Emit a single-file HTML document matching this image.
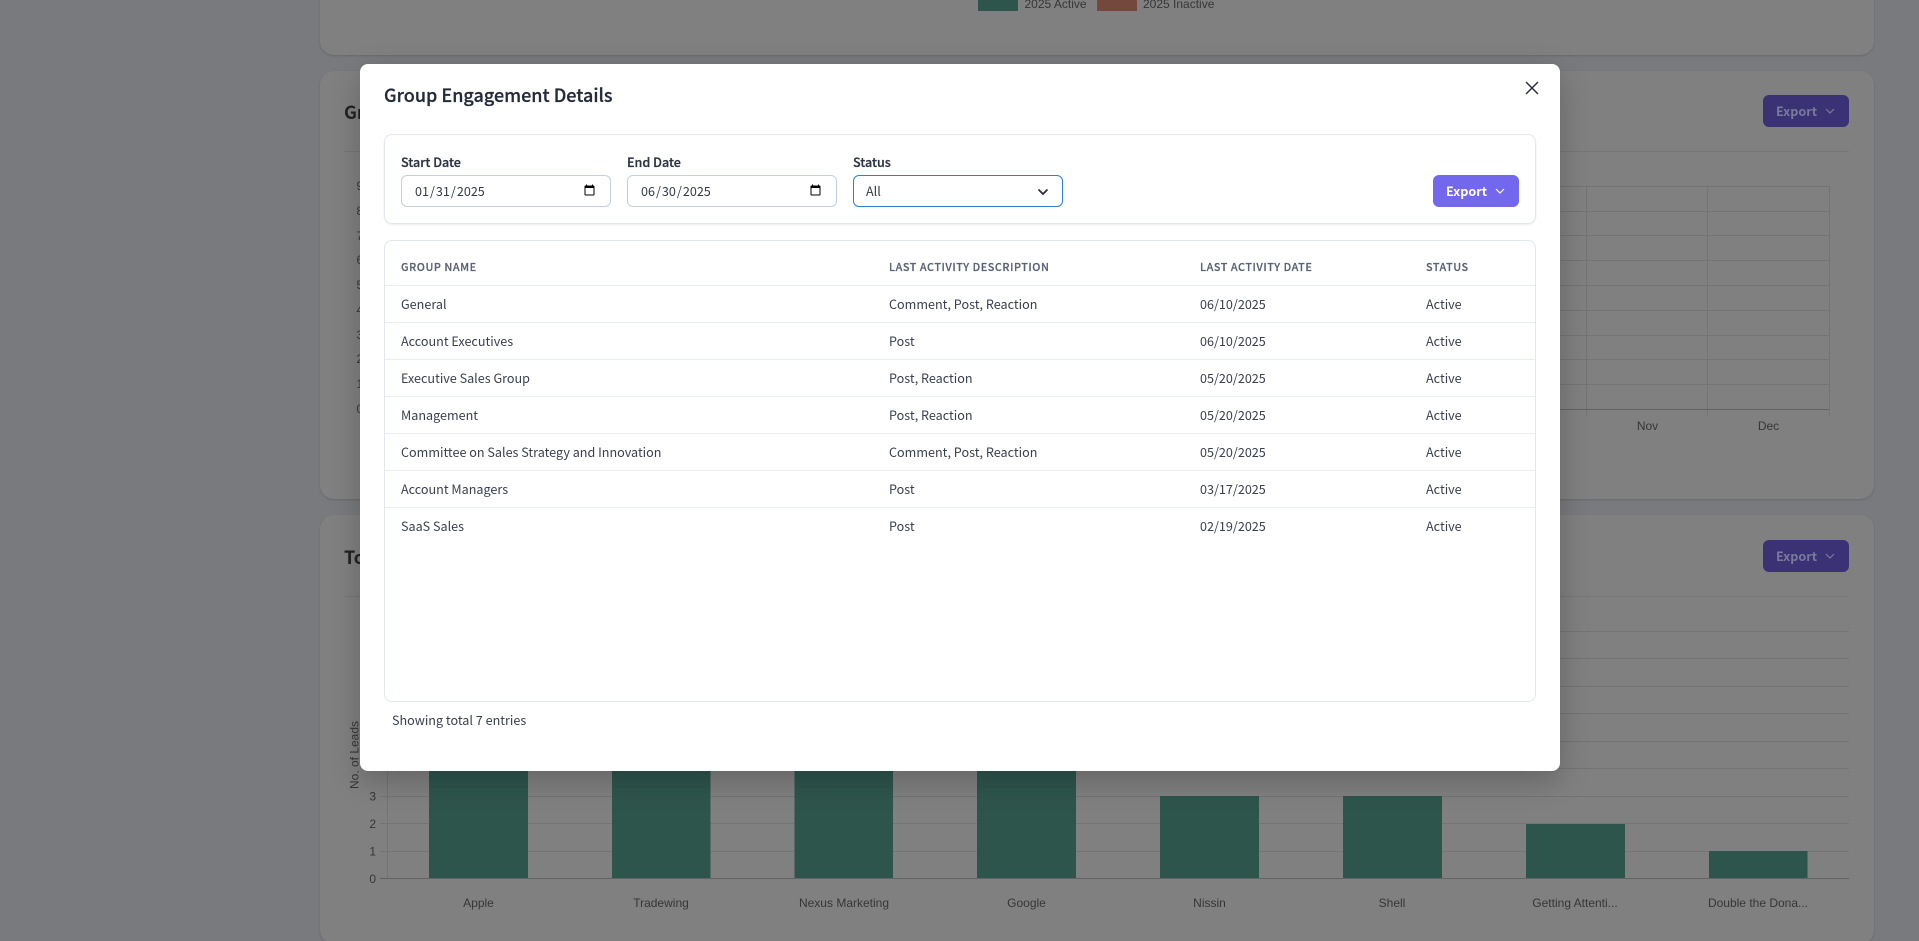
<!DOCTYPE html>
<html lang="en">
<head>
<meta charset="utf-8">
<title>Group Engagement Details</title>
<style>
*{box-sizing:border-box}
html,body{margin:0;padding:0;width:1919px;height:941px;overflow:hidden;background:#797a7d}
body{position:relative;font-family:"Noto Sans CJK SC","Liberation Sans",sans-serif;color:#343a4a}
.bgcard{position:absolute;left:320px;width:1554px;background:#808080;border-radius:14px;box-shadow:0 1px 2px rgba(0,0,0,.14)}
svg.bg{position:absolute;left:0;top:0}
svg.bg text{font-family:"Liberation Sans",sans-serif;font-size:12px;fill:#363636}
.bgtitle{position:absolute;left:344px;font-size:18px;font-weight:700;color:#222;line-height:24px;white-space:nowrap}
.bgbtn{position:absolute;left:1763px;width:86px;height:32px;border-radius:6px;background:#3a3274;color:#7a7a98;font-size:12.6px;font-weight:700;line-height:32px;padding-left:13px}
.bgbtn svg{position:absolute;left:62px;top:13px}
.modal{position:absolute;left:360px;top:64px;width:1200px;height:707px;background:#fff;border-radius:8px;box-shadow:0 10px 30px rgba(0,0,0,.22)}
.abs{position:absolute}
h2{position:absolute;left:24px;top:15px;margin:0;font-size:18px;font-weight:500;line-height:32px;color:#252b3a;white-space:nowrap;-webkit-text-stroke:.25px #252b3a}
.filter{position:absolute;left:24px;top:70px;width:1152px;height:90px;border:1px solid #e2e6f0;border-radius:8px;box-shadow:0 1px 2px rgba(30,40,80,.08)}
label{position:absolute;top:15.5px;font-size:12.6px;font-weight:500;line-height:22px;color:#2c3344;-webkit-text-stroke:.25px #2c3344}
input,select{position:absolute;top:40px;width:210px;height:32px;font-family:"Noto Sans CJK SC","Liberation Sans",sans-serif;font-size:12.6px;color:#343a4a;background:#fff;border:1px solid #c3cfe0;border-radius:6px;padding:0 12px 2px;outline:none}
select{appearance:none;-webkit-appearance:none;border-color:#2e7ed6}
.tcard{position:absolute;left:24px;top:176px;width:1152px;height:462px;border:1px solid #e2e6f0;border-radius:8px;overflow:hidden}
table{border-collapse:separate;border-spacing:0;table-layout:fixed;width:1150px;margin-top:0;font-size:12.6px}
th{height:45px;padding:8px 0 0 16px;font-size:10.8px;font-weight:500;letter-spacing:.55px;text-align:left;color:#5a6175;text-transform:uppercase;border-bottom:1px solid #e8ecf3;line-height:18px;-webkit-text-stroke:.2px #5a6175}
td{height:37px;padding:0 0 0 16px;border-bottom:1px solid #e8ecf3;color:#3a4050;line-height:20px}
tr:last-child td{border-bottom:0;padding-bottom:2px}
.btn{position:absolute;left:1073px;top:111px;width:86px;height:32px;background:#7367ee;border-radius:6px;color:#fff;font-size:12.6px;font-weight:700;line-height:32px;padding-left:13px}
.foot{position:absolute;left:32px;top:645px;font-size:12.6px;line-height:22px;color:#3a4050;white-space:nowrap}
</style>
</head>
<body>
<div class="bgcard" style="top:-300px;height:355px"></div>
<div class="bgcard" style="top:71px;height:428px"></div>
<div class="bgcard" style="top:515px;height:429px"></div>

<svg class="bg" width="1919" height="941" viewBox="0 0 1919 941">
  <!-- legend -->
  <rect x="978" y="-6" width="40" height="17" fill="#2e554c"/>
  <text x="1024.5" y="8">2025 Active</text>
  <rect x="1097" y="-6" width="40" height="17" fill="#74483c"/>
  <text x="1143" y="8">2025 Inactive</text>

  <!-- dividers -->
  <g stroke="#767676" stroke-width="1">
    <line x1="344" y1="151.5" x2="1849" y2="151.5"/>
    <line x1="344" y1="596.5" x2="1849" y2="596.5"/>
  </g>

  <!-- chart 2 grid -->
  <g stroke="#747474" stroke-width="1">
    <line x1="370" y1="186.5" x2="1829" y2="186.5"/>
    <line x1="370" y1="211.5" x2="1829" y2="211.5"/>
    <line x1="370" y1="235.5" x2="1829" y2="235.5"/>
    <line x1="370" y1="260.5" x2="1829" y2="260.5"/>
    <line x1="370" y1="285.5" x2="1829" y2="285.5"/>
    <line x1="370" y1="310.5" x2="1829" y2="310.5"/>
    <line x1="370" y1="335.5" x2="1829" y2="335.5"/>
    <line x1="370" y1="359.5" x2="1829" y2="359.5"/>
    <line x1="370" y1="384.5" x2="1829" y2="384.5"/>
    <line x1="1586.5" y1="186" x2="1586.5" y2="416"/>
    <line x1="1707.5" y1="186" x2="1707.5" y2="416"/>
    <line x1="1829.5" y1="186" x2="1829.5" y2="416"/>
  </g>
  <line x1="370" y1="409.5" x2="1829" y2="409.5" stroke="#626262" stroke-width="1"/>
  <g>
    <text x="356.5" y="190">9</text><text x="356.5" y="215">8</text><text x="356.5" y="240">7</text>
    <text x="356.5" y="264">6</text><text x="356.5" y="289">5</text><text x="356.5" y="314">4</text>
    <text x="356.5" y="339">3</text><text x="356.5" y="363">2</text><text x="356.5" y="388">1</text>
    <text x="356.5" y="413">0</text>
    <text x="1647.5" y="430" text-anchor="middle">Nov</text>
    <text x="1768.5" y="430" text-anchor="middle">Dec</text>
  </g>

  <!-- chart 3 grid -->
  <g stroke="#747474" stroke-width="1">
    <line x1="380" y1="631.5" x2="1849" y2="631.5"/>
    <line x1="380" y1="658.5" x2="1849" y2="658.5"/>
    <line x1="380" y1="686.5" x2="1849" y2="686.5"/>
    <line x1="380" y1="713.5" x2="1849" y2="713.5"/>
    <line x1="380" y1="741.5" x2="1849" y2="741.5"/>
    <line x1="380" y1="768.5" x2="1849" y2="768.5"/>
    <line x1="380" y1="796.5" x2="1849" y2="796.5"/>
    <line x1="380" y1="823.5" x2="1849" y2="823.5"/>
    <line x1="380" y1="851.5" x2="1849" y2="851.5"/>
    <line x1="387.5" y1="620" x2="387.5" y2="878"/>
  </g>
  <line x1="380" y1="878.5" x2="1849" y2="878.5" stroke="#626262" stroke-width="1"/>
  <g fill="#2e554c">
    <rect x="429" y="700" width="99" height="178"/>
    <rect x="612" y="700" width="98.500" height="178"/>
    <rect x="794.500" y="700" width="98.500" height="178"/>
    <rect x="977" y="700" width="99" height="178"/>
    <rect x="1160" y="796" width="99" height="82"/>
    <rect x="1343" y="796" width="99" height="82"/>
    <rect x="1526" y="824" width="99" height="54"/>
    <rect x="1709" y="851" width="98.500" height="27"/>
  </g>
  <g>
    <text x="376" y="800.500" text-anchor="end">3</text>
    <text x="376" y="828" text-anchor="end">2</text>
    <text x="376" y="855.500" text-anchor="end">1</text>
    <text x="376" y="883" text-anchor="end">0</text>
    <text x="478.500" y="907" text-anchor="middle">Apple</text>
    <text x="661" y="907" text-anchor="middle">Tradewing</text>
    <text x="844" y="907" text-anchor="middle">Nexus Marketing</text>
    <text x="1026.500" y="907" text-anchor="middle">Google</text>
    <text x="1209.500" y="907" text-anchor="middle">Nissin</text>
    <text x="1392" y="907" text-anchor="middle">Shell</text>
    <text x="1575" y="907" text-anchor="middle">Getting Attenti...</text>
    <text x="1758" y="907" text-anchor="middle">Double the Dona...</text>
    <text transform="translate(358.500 755) rotate(-90)" text-anchor="middle">No. of Leads</text>
  </g>
</svg>

<div class="bgtitle" style="top:100px">Group Engagement</div>
<div class="bgtitle" style="top:545px">Top Companies</div>
<div class="bgbtn" style="top:95px">Export<svg width="10" height="7" viewBox="0 0 10 7"><path d="M1 1l4 4 4-4" fill="none" stroke="#7a7a98" stroke-width="1.200"/></svg></div>
<div class="bgbtn" style="top:540px">Export<svg width="10" height="7" viewBox="0 0 10 7"><path d="M1 1l4 4 4-4" fill="none" stroke="#7a7a98" stroke-width="1.200"/></svg></div>

<div class="modal">
  <h2>Group Engagement Details</h2>
  <svg class="abs" style="left:1165px;top:17px" width="14" height="14" viewBox="0 0 14 14"><path d="M1 1l12 12M13 1L1 13" fill="none" stroke="#2b3040" stroke-width="1.500"/></svg>

  <div class="filter">
    <label style="left:16px">Start Date</label>
    <input type="date" value="2025-01-31" style="left:16px">
    <label style="left:242px">End Date</label>
    <input type="date" value="2025-06-30" style="left:242px">
    <label style="left:468px">Status</label>
    <select style="left:468px"><option>All</option></select>
    <svg class="abs" style="left:652px;top:53px" width="12" height="8" viewBox="0 0 12 8"><path d="M1.500 1.500L6 6l4.500-4.500" fill="none" stroke="#2b3040" stroke-width="1.800"/></svg>
  </div>
  <div class="btn">Export<svg class="abs" style="left:62px;top:13px" width="10" height="7" viewBox="0 0 10 7"><path d="M1 1l4 4 4-4" fill="none" stroke="#fff" stroke-width="1.200"/></svg></div>

  <div class="tcard">
    <table>
      <colgroup><col style="width:488px"><col style="width:311px"><col style="width:226px"><col style="width:125px"></colgroup>
      <thead><tr><th>Group Name</th><th>Last Activity Description</th><th>Last Activity Date</th><th>Status</th></tr></thead>
      <tbody>
        <tr><td>General</td><td>Comment, Post, Reaction</td><td>06/10/2025</td><td>Active</td></tr>
        <tr><td>Account Executives</td><td>Post</td><td>06/10/2025</td><td>Active</td></tr>
        <tr><td>Executive Sales Group</td><td>Post, Reaction</td><td>05/20/2025</td><td>Active</td></tr>
        <tr><td>Management</td><td>Post, Reaction</td><td>05/20/2025</td><td>Active</td></tr>
        <tr><td>Committee on Sales Strategy and Innovation</td><td>Comment, Post, Reaction</td><td>05/20/2025</td><td>Active</td></tr>
        <tr><td>Account Managers</td><td>Post</td><td>03/17/2025</td><td>Active</td></tr>
        <tr><td>SaaS Sales</td><td>Post</td><td>02/19/2025</td><td>Active</td></tr>
      </tbody>
    </table>
  </div>
  <div class="foot">Showing total 7 entries</div>
</div>
</body>
</html>
